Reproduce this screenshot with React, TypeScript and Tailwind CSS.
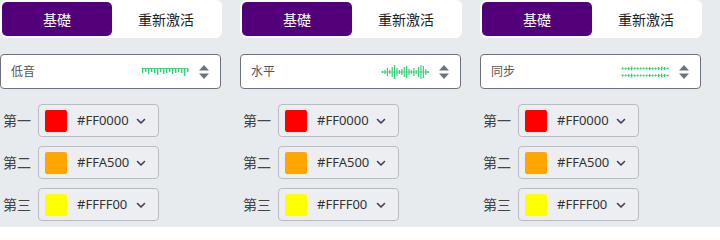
import React from "react";

const font = { fontFamily: '"Noto Sans", "Noto Sans CJK SC", sans-serif' };

function Wave1() {
  const h = [4, 3, 5, 3, 4, 6, 3, 5, 4, 3, 5, 4, 3, 4, 7, 3];
  return (
    <svg width="47" height="10" viewBox="0 0 47 10">
      <line x1="0" y1="1.5" x2="46" y2="1.5" stroke="#4ade80" strokeWidth="1" />
      {h.map((v, i) => (
        <rect key={i} x={i * 3} y={1} width="1.4" height={v + 1} fill="#34d178" />
      ))}
    </svg>
  );
}

function Wave2() {
  const h = [2, 4, 8, 4, 10, 14, 8, 4, 6, 10, 12, 6, 4, 8, 4, 10, 14, 12, 6, 2];
  return (
    <svg width="48" height="16" viewBox="0 0 48 16">
      <line x1="0" y1="8" x2="48" y2="8" stroke="#4ade80" strokeWidth="1" />
      {h.map((v, i) => (
        <rect key={i} x={1 + i * 2.4} y={8 - v / 2} width="1.2" height={v} fill="#34d178" />
      ))}
    </svg>
  );
}

function Wave3() {
  const row = (y: number, k: number) => {
    const h = [2, 2, 3, 4, 2, 2, 2, 2, 2, 3, 2, 2, 3, 4, 3, 2];
    return (
      <g key={k}>
        <line x1="0" y1={y} x2="48" y2={y} stroke="#86efac" strokeWidth="1" />
        {h.map((v, i) => (
          <rect key={i} x={1 + i * 3} y={y - v / 2} width="1.3" height={v} fill="#34d178" />
        ))}
      </g>
    );
  };
  return (
    <svg width="48" height="12" viewBox="0 0 48 12">
      {row(2.5, 0)}
      {row(9.5, 1)}
    </svg>
  );
}

function UpDown() {
  return (
    <svg width="12" height="16" viewBox="0 0 12 16">
      <path d="M6 1 L11 6.5 H1 Z" fill="#6b7280" />
      <path d="M6 15 L11 9.5 H1 Z" fill="#6b7280" />
    </svg>
  );
}

function Chevron() {
  return (
    <svg width="12" height="12" viewBox="0 0 12 12">
      <path d="M2.5 4.5 L6 8 L9.5 4.5" fill="none" stroke="#374151" strokeWidth="1.6" strokeLinecap="round" strokeLinejoin="round" />
    </svg>
  );
}

const colors = [
  { label: "第一", hex: "#FF0000" },
  { label: "第二", hex: "#FFA500" },
  { label: "第三", hex: "#FFFF00" },
];

function Column({ name, wave }: { name: string; wave: React.ReactNode }) {
  return (
    <div className="w-[222px] flex flex-col">
      <div className="h-[38px] bg-white rounded-[6px] p-[2px] flex">
        <div className="w-[110px] bg-[#52007a] rounded-[5px] text-white text-[14px] flex items-center justify-center">
          基礎
        </div>
        <div className="flex-1 text-[14px] text-[#222] flex items-center justify-center">重新激活</div>
      </div>
      <div className="mt-[16px] h-[35px] w-[221px] bg-white border border-[#6b7280] rounded-[4px] flex items-center pl-[10px] pr-[10px]">
        <span className="text-[12px] text-[#555]">{name}</span>
        <div className="ml-auto flex items-center mr-[9px]">{wave}</div>
        <UpDown />
      </div>
      <div className="mt-[15px] flex flex-col gap-[9px]">
        {colors.map((c) => (
          <div key={c.label} className="flex items-center">
            <span className="w-[38px] pl-[3px] text-[14px] text-[#444]">{c.label}</span>
            <div className="w-[121px] h-[33px] border border-[#b8bcc2] rounded-[4px] bg-[#eceef1] flex items-center pl-[6px] pr-[11px]">
              <div className="w-[22px] h-[22px] rounded-[2px]" style={{ backgroundColor: c.hex }} />
              <span className="ml-[10px] text-[13px] text-[#333]">{c.hex}</span>
              <span className="ml-auto flex"><Chevron /></span>
            </div>
          </div>
        ))}
      </div>
    </div>
  );
}

export default function App() {
  return (
    <div className="w-[720px] h-[227px] bg-[#e8ebee] overflow-hidden flex gap-[18px]" style={font}>
      <Column name="低音" wave={<Wave1 />} />
      <Column name="水平" wave={<Wave2 />} />
      <Column name="同步" wave={<Wave3 />} />
    </div>
  );
}
